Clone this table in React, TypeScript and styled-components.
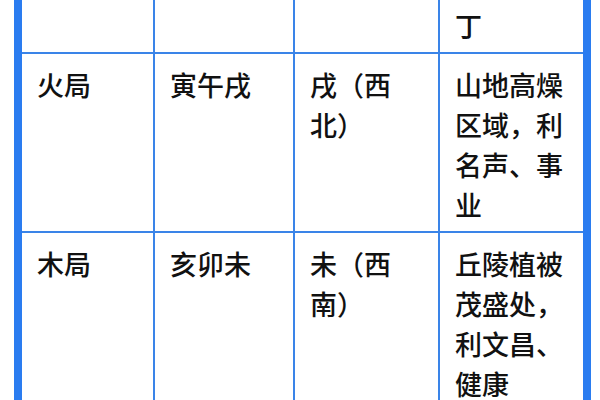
import React from "react";
import styled, { createGlobalStyle } from "styled-components";

const GlobalStyle = createGlobalStyle`
  html, body {
    margin: 0;
    padding: 0;
    background: #ffffff;
    overflow: hidden;
  }
`;

const Page = styled.div`
  width: 600px;
  height: 400px;
  overflow: hidden;
  padding-left: 14px;
  box-sizing: border-box;
`;

const Table = styled.div`
  display: grid;
  grid-template-columns: 131px 138px 143px 143px;
  gap: 2px;
  width: fit-content;
  margin-top: -125px;
  background: #3a84e8;
  border-left: 8px solid #2a7cf0;
  border-right: 8px solid #2a7cf0;
`;

const Cell = styled.div`
  background: #ffffff;
  padding: 11px 15px 6px;
  font-family: "Noto Sans CJK SC", "Noto Sans", sans-serif;
  font-size: 27px;
  font-weight: 500;
  line-height: 40px;
  color: #111111;
`;

const rows = [
  ["水局", "申子辰", "辰（东南）", "水源充足之地，利财运、人丁"],
  ["火局", "寅午戌", "戌（西北）", "山地高燥区域，利名声、事业"],
  ["木局", "亥卯未", "未（西南）", "丘陵植被茂盛处，利文昌、健康"],
];

const App: React.FC = () => {
  return (
    <>
      <GlobalStyle />
      <Page>
        <Table>
          {rows.map((row, i) =>
            row.map((text, j) => <Cell key={`${i}-${j}`}>{text}</Cell>)
          )}
        </Table>
      </Page>
    </>
  );
};

export default App;
